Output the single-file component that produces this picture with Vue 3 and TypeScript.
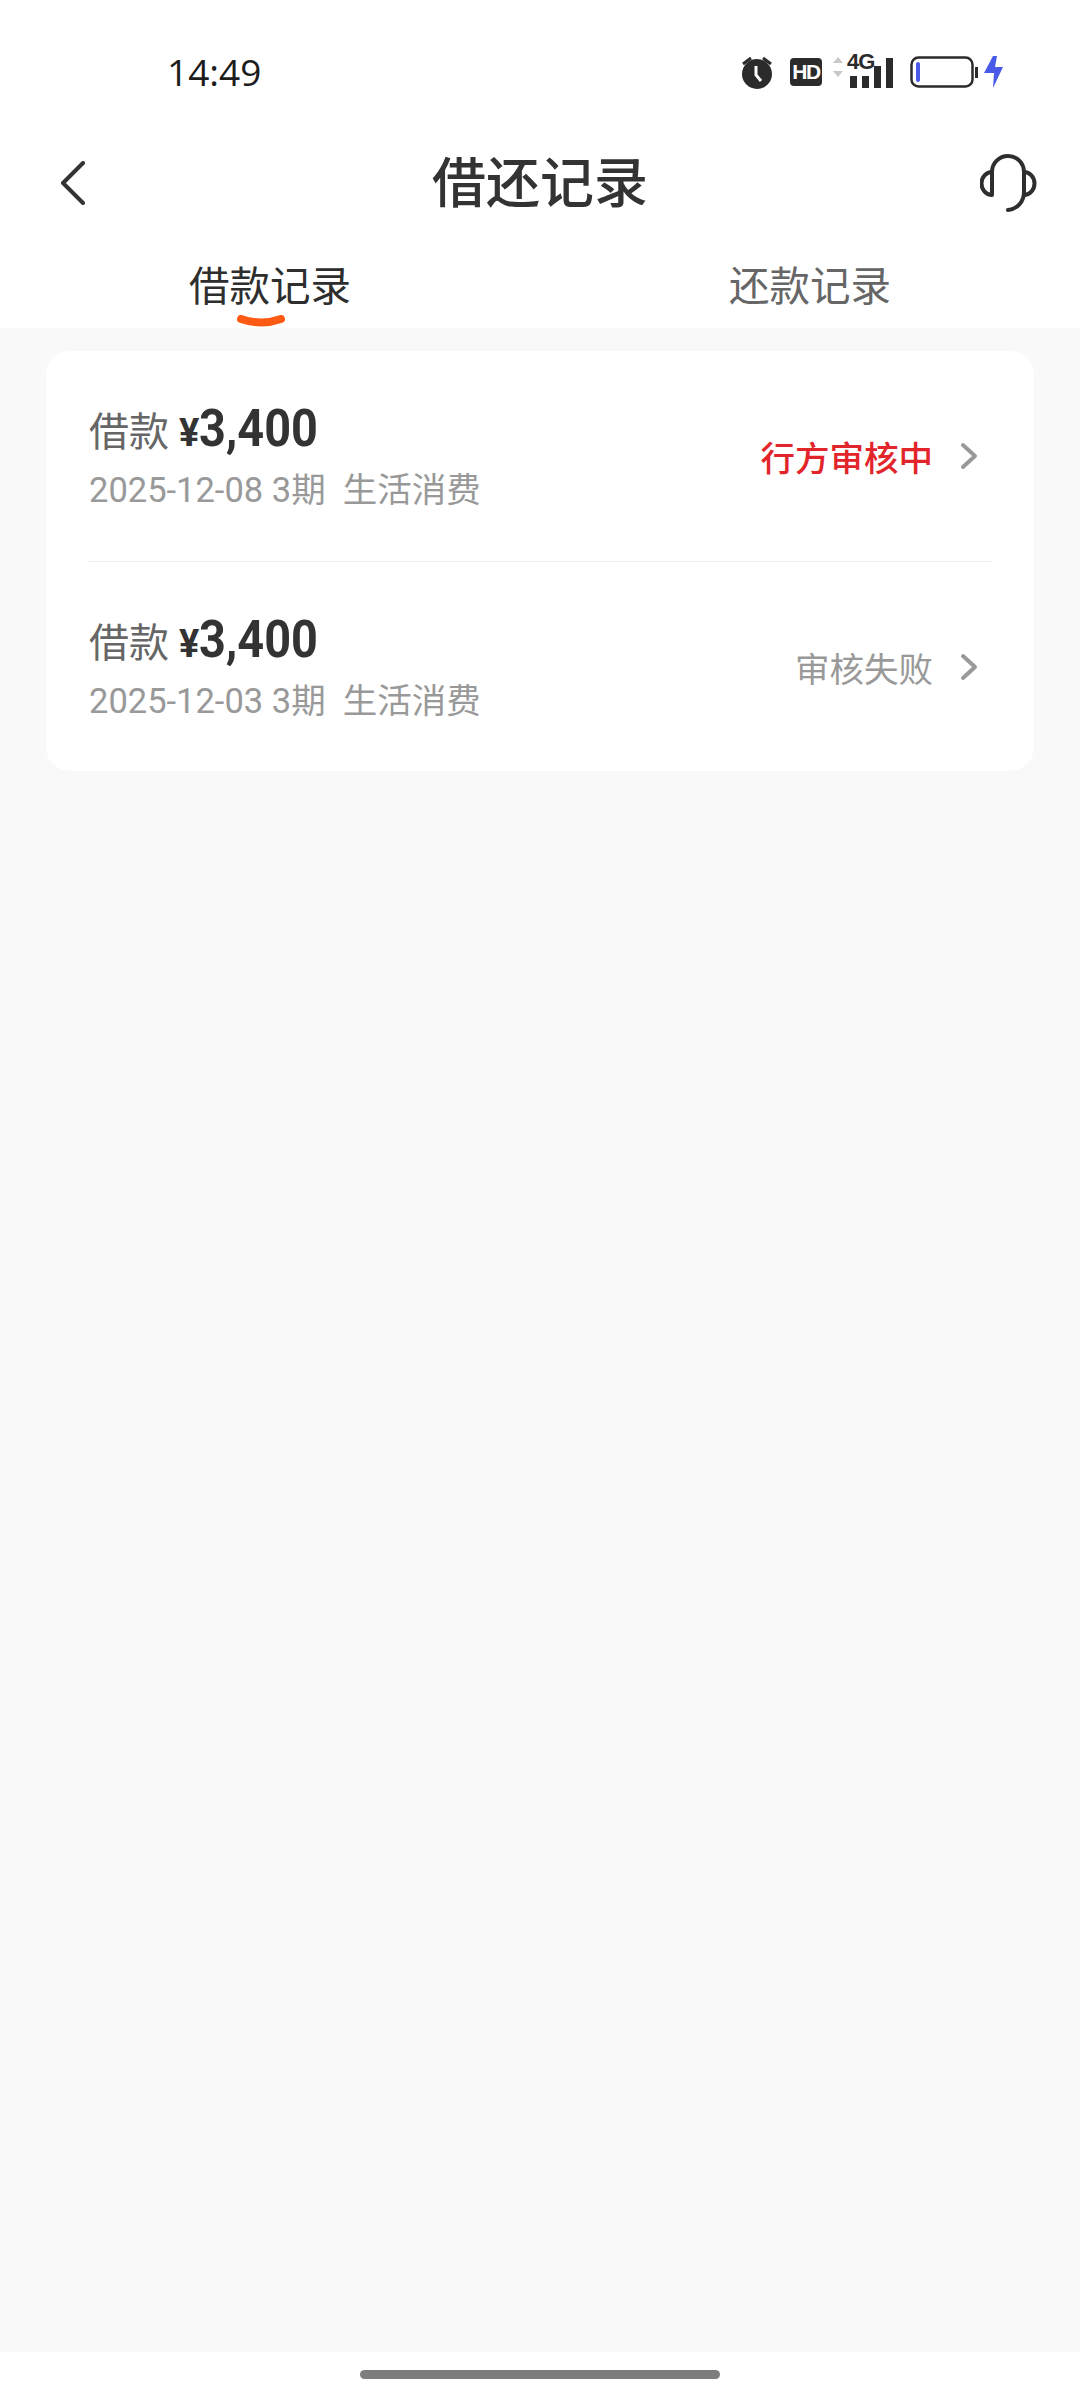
<template>
  <div class="page">
    <header class="top">
      <div class="status">
        <span class="time">14:49</span>
        <div class="status-icons">
          <svg class="alarm" width="32" height="34" viewBox="0 0 32 34">
            <circle cx="16" cy="19" r="15" fill="#2b2b2b" />
            <path d="M2 9l8-6M30 9l-8-6" stroke="#2b2b2b" stroke-width="3" fill="none" />
            <path d="M15 11v9l5 6" stroke="#fff" stroke-width="3" fill="none" />
          </svg>
          <span class="hd">HD</span>
          <div class="signal">
            <svg class="updown" width="10" height="30" viewBox="0 0 10 30">
              <path d="M5 1l5 6H0zM5 21l5-6H0z" fill="#c8c8c8" />
            </svg>
            <span class="net">4G</span>
            <svg class="bars" width="44" height="30" viewBox="0 0 44 30">
              <rect x="0" y="18" width="7" height="12" fill="#2b2b2b" />
              <rect x="12" y="18" width="7" height="12" fill="#2b2b2b" />
              <rect x="24" y="8" width="7" height="22" fill="#2b2b2b" />
              <rect x="36" y="0" width="7" height="30" fill="#2b2b2b" />
            </svg>
          </div>
          <svg class="battery" width="68" height="32" viewBox="0 0 68 32">
            <rect x="1.5" y="1.5" width="61" height="29" rx="7" fill="none" stroke="#2b2b2b" stroke-width="2.500" />
            <rect x="6" y="6" width="4" height="20" rx="2" fill="#4a5ae8" />
            <rect x="65" y="11" width="3" height="11" fill="#2b2b2b" />
          </svg>
          <svg class="bolt" width="20" height="32" viewBox="0 0 20 32">
            <path d="M9 0h4l-2 11h8L9 32l1-15H0z" fill="#4a5ae8" />
          </svg>
        </div>
      </div>
      <nav class="nav">
        <svg class="back" width="26" height="44" viewBox="0 0 26 44">
          <path d="M23 2L3 22l20 20" fill="none" stroke="#333" stroke-width="4" stroke-linecap="round" stroke-linejoin="round" />
        </svg>
        <h1 class="title">借还记录</h1>
        <svg class="service" width="58" height="58" viewBox="0 0 58 58">
          <path d="M12 41V18a16 16 0 0 1 32 0v20c0 10-7 17-16 18" fill="none" stroke="#2e2e2e" stroke-width="4" stroke-linecap="round" />
          <path d="M12 18a10.500 11.500 0 0 0 0 23M44 18a10.500 11.500 0 0 1 0 23" fill="none" stroke="#2e2e2e" stroke-width="4" />
        </svg>
      </nav>
      <div class="tabs">
        <div
          v-for="(tab, i) in tabs"
          :key="tab"
          class="tab"
          :class="{ 'tab--active': i === 0 }"
        >
          {{ tab }}
          <svg v-if="i === 0" class="smile" width="48" height="14" viewBox="0 0 48 14">
            <path d="M4 4q20 7 40 0" fill="none" stroke="#ff5a14" stroke-width="8" stroke-linecap="round" />
          </svg>
        </div>
      </div>
    </header>

    <main class="content">
      <section class="card">
        <div v-for="item in records" :key="item.date" class="row">
          <div class="info">
            <div class="line">
              <span class="label">借款</span>
              <span class="yen">¥</span>
              <span class="amount">3,400</span>
            </div>
            <div class="meta">{{ item.date }} 3期&nbsp;&nbsp;生活消费</div>
          </div>
          <span class="state" :class="{ 'state--active': item.active }">{{ item.state }}</span>
          <svg class="chevron" width="18" height="28" viewBox="0 0 18 28">
            <path d="M3 3l12 11L3 25" fill="none" stroke="#999" stroke-width="4" stroke-linecap="round" stroke-linejoin="round" />
          </svg>
        </div>
      </section>
    </main>

    <footer class="home">
      <span class="handle"></span>
    </footer>
  </div>
</template>

<script setup lang="ts">
const tabs = ['借款记录', '还款记录']

const records = [
  { date: '2025-12-08', state: '行方审核中', active: true },
  { date: '2025-12-03', state: '审核失败', active: false },
]
</script>

<style>
html,
body {
  margin: 0;
  background: #f9f9f9;
}
</style>

<style scoped>
.page {
  display: flex;
  flex-direction: column;
  width: 1080px;
  height: 2400px;
  overflow: hidden;
  background: #f9f9f9;
  color: #333;
  font-family: Roboto, "Noto Sans CJK SC", sans-serif;
}

.top {
  height: 328px;
  background: #fff;
}

.status {
  display: flex;
  align-items: center;
  justify-content: space-between;
  height: 72px;
  padding: 36px 76px 0 167px;
}

.time {
  margin-top: -2px;
  font-family: "Open Sans", sans-serif;
  font-size: 37px;
  font-weight: 500;
  color: #1c1c1c;
}

.status-icons {
  display: flex;
  align-items: center;
}

.alarm {
  margin-right: 17px;
}

.hd {
  width: 32px;
  height: 28px;
  border-radius: 4px;
  background: #2b2b2b;
  color: #fff;
  font-family: "Liberation Sans", sans-serif;
  font-size: 21px;
  font-weight: 700;
  line-height: 28px;
  text-align: center;
  letter-spacing: -1.5px;
}

.signal {
  position: relative;
  width: 60px;
  height: 30px;
  margin: 0 17px 0 11px;
}

.updown {
  position: absolute;
  left: 0;
  top: -1px;
}

.net {
  position: absolute;
  left: 14px;
  top: -6px;
  font-family: "Liberation Sans", sans-serif;
  font-size: 22px;
  font-weight: 700;
  line-height: 22px;
  letter-spacing: -1px;
  color: #2b2b2b;
}

.bars {
  position: absolute;
  left: 17px;
  top: 1px;
}

.bolt {
  margin-left: 6px;
}

.nav {
  display: flex;
  align-items: center;
  justify-content: space-between;
  height: 110px;
  margin-top: 20px;
  padding: 0 42px 0 60px;
}

.title {
  margin: 4px 0 0 14px;
  font-size: 54px;
  font-weight: 500;
  line-height: 70px;
  color: #333;
}

.tabs {
  display: grid;
  grid-template-columns: 1fr 1fr;
  margin-top: 20px;
}

.tab {
  position: relative;
  font-size: 40.5px;
  line-height: 58px;
  color: #666;
  text-align: center;
}

.tab--active {
  color: #2e2e2e;
}

.smile {
  position: absolute;
  left: 237px;
  top: 57px;
}

.content {
  flex: 1;
  padding: 23px 46px 0;
}

.card {
  border-radius: 24px;
  background: #fff;
}

.row {
  display: flex;
  align-items: center;
  box-sizing: border-box;
  height: 210px;
  margin: 0 42px;
  padding-right: 14px;
}

.row + .row {
  border-top: 1px solid #eee;
}

.info {
  flex: 1;
  padding-left: 1px;
}

.line {
  display: flex;
  align-items: baseline;
  height: 58px;
}

.label {
  font-size: 40px;
  color: #666;
}

.yen {
  margin-left: 10px;
  font-size: 38px;
  font-weight: 700;
}

.amount {
  font-size: 52px;
  font-weight: 700;
  transform: scaleX(0.9);
  transform-origin: left;
}

.meta {
  margin-top: 10px;
  font-size: 34.5px;
  line-height: 48px;
  color: #999;
}

.state {
  margin-right: 27px;
  font-size: 34.5px;
  color: #999;
}

.state--active {
  color: #e2242b;
  font-weight: 500;
}

.home {
  display: flex;
  align-items: flex-start;
  justify-content: center;
  height: 48px;
  background: #fff;
}

.handle {
  width: 360px;
  height: 9px;
  margin-top: 18px;
  border-radius: 5px;
  background: #7d7d7d;
}
</style>
